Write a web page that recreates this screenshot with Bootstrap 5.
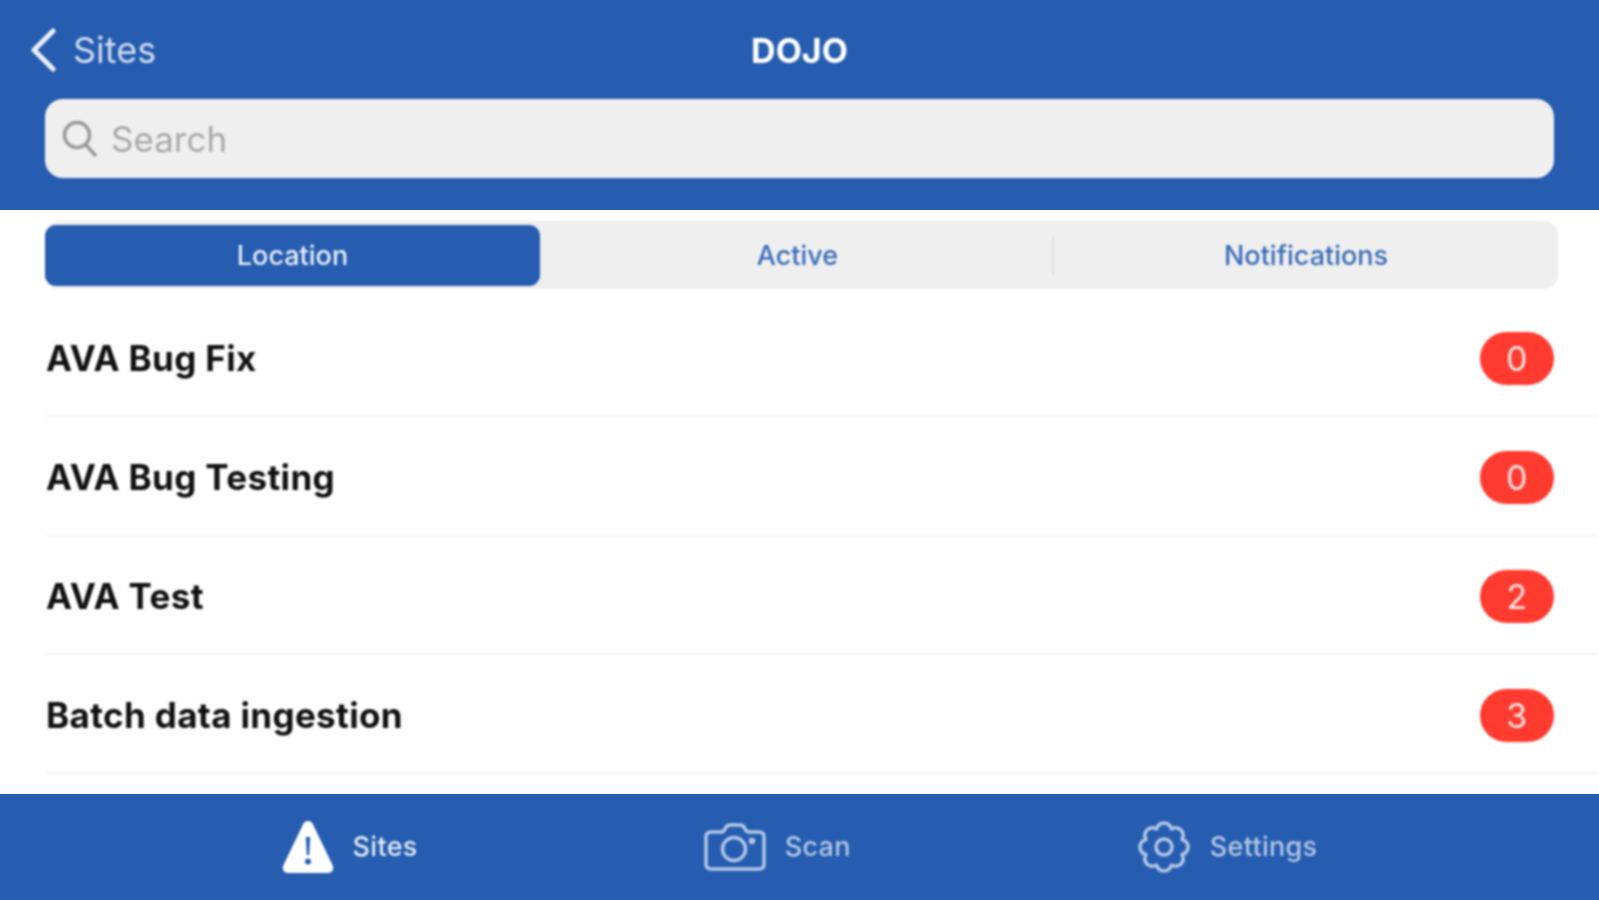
<!DOCTYPE html>
<html lang="en">

<head>
  <meta charset="UTF-8" />
  <meta name="viewport" content="width=device-width, initial-scale=1" />
  <title>DOJO</title>
  <link href="https://cdn.jsdelivr.net/npm/bootstrap@5.3.3/dist/css/bootstrap.min.css" rel="stylesheet" />
  <style>
    html, body {
      height: 100%;
      overflow: hidden;
    }

    body {
      font-family: Inter, "Liberation Sans", sans-serif;
      background: #fff;
    }

    .app-shell {
      height: 900px;
    }

    /* the reference is a soft, upscaled capture */
    .title-row, .search-box, .segment-bar, .site-list, .tab-entry {
      filter: blur(0.9px);
    }

    .top-area {
      background: #265db0;
      height: 210px;
      padding: 0 45px 32px;
    }

    .title-row {
      height: 99px;
      color: #fff;
    }

    .back-link {
      left: -15px;
      color: #cfdcf0;
      font-size: 36px;
      gap: 17px;
      text-decoration: none;
    }

    .page-title {
      font-size: 34px;
      font-weight: 700;
      padding-top: 2px;
    }

    .search-box {
      height: 79px;
      background: #efefef;
      border-radius: 18px;
      padding-left: 17px;
      gap: 13px;
    }

    .search-box input {
      font-size: 35px;
      color: #555;
      background: transparent;
      outline: none;
      padding-top: 2px !important;
    }

    .search-box input::placeholder {
      color: #a9a9a9;
    }

    .segment-bar {
      margin: 11px 41px 0 45px;
      height: 68px;
      background: #efefef;
      border-radius: 14px;
    }

    .segment-item {
      font-size: 27px;
      font-weight: 500;
      color: #3a6cb7;
      width: 512px;
      padding: 2px 0 0 3px;
    }

    .segment-first {
      width: 495px;
      height: 61px;
      padding-left: 0;
      background: #265db0;
      color: #e6edf7;
      border-radius: 11px;
    }

    .segment-last {
      border-left: 2px solid #e0e0e0;
      flex: 1;
      height: 38px;
      padding-left: 0;
    }

    .site-list {
      padding-left: 46px;
      margin-top: 9px;
    }

    .site-row {
      height: 119px;
      padding-top: 4px;
      padding-right: 45px;
      border-bottom: 2px solid #f4f4f4;
      font-size: 35px;
      font-weight: 700;
      letter-spacing: .35px;
      color: #111;
    }

    .count-pill {
      width: 74px;
      height: 53px;
      border-radius: 27px;
      background: #ff3b30;
      color: #ffe3e0;
      font-size: 34px;
      font-weight: 400;
    }

    .tab-bar {
      height: 106px;
      background: #265db0;
      gap: 286px;
    }

    .tab-entry {
      color: #b3c7e5;
      font-size: 27px;
      font-weight: 500;
      letter-spacing: .3px;
      gap: 19px;
    }

    .tab-entry-active {
      color: #dfe8f5;
    }
  </style>
</head>

<body>
  <div class="app-shell d-flex flex-column">

    <!-- Header with search -->
    <div class="top-area">
      <div class="title-row d-flex align-items-center justify-content-center position-relative">
        <a class="back-link position-absolute d-flex align-items-center" href="#">
          <svg width="26" height="44" viewBox="0 0 26 44" fill="none" stroke="#e9effa" stroke-width="5" stroke-linecap="round" stroke-linejoin="round">
            <path d="M23 3 L4 22 L23 41" />
          </svg>
          <span>Sites</span>
        </a>
        <span class="page-title">DOJO</span>
      </div>
      <div class="search-box d-flex align-items-center">
        <svg width="36" height="38" viewBox="0 0 36 38" fill="none" stroke="#9a9a9a" stroke-width="3.5" stroke-linecap="round">
          <circle cx="15" cy="15" r="12.5" />
          <path d="M24 25 L33 35" />
        </svg>
        <input class="border-0 flex-grow-1 p-0 shadow-none" type="text" placeholder="Search" />
      </div>
    </div>

    <!-- Segmented control -->
    <div class="segment-bar d-flex align-items-center">
      <div class="segment-item segment-first d-flex align-items-center justify-content-center">Location</div>
      <div class="segment-item d-flex align-items-center justify-content-center">Active</div>
      <div class="segment-item segment-last d-flex align-items-center justify-content-center">Notifications</div>
    </div>

    <!-- Sites -->
    <div class="site-list flex-grow-1 overflow-hidden">
      <div class="site-row d-flex align-items-center justify-content-between">
        <span>AVA Bug Fix</span><span class="count-pill d-flex align-items-center justify-content-center">0</span>
      </div>
      <div class="site-row d-flex align-items-center justify-content-between">
        <span>AVA Bug Testing</span><span class="count-pill d-flex align-items-center justify-content-center">0</span>
      </div>
      <div class="site-row d-flex align-items-center justify-content-between">
        <span>AVA Test</span><span class="count-pill d-flex align-items-center justify-content-center">2</span>
      </div>
      <div class="site-row d-flex align-items-center justify-content-between">
        <span>Batch data ingestion</span><span class="count-pill d-flex align-items-center justify-content-center">3</span>
      </div>
    </div>

    <!-- Bottom tabs -->
    <div class="tab-bar d-flex align-items-center justify-content-center">
      <div class="tab-entry tab-entry-active d-flex align-items-center">
        <svg width="52" height="54" viewBox="0 0 52 54">
          <path fill="#fff" fill-rule="evenodd" d="M26 1 C28.500 1 30 2.500 31 4.500 L50.500 45 C52.500 49.500 50 53 46 53 L6 53 C2 53 -0.500 49.500 1.500 45 L21 4.500 C22 2.500 23.500 1 26 1 Z M23.800 17 L24.800 35 L27.200 35 L28.200 17 Z M26 38.500 A3 3 0 1 0 26 44.500 A3 3 0 1 0 26 38.500 Z" />
        </svg>
        <span>Sites</span>
      </div>
      <div class="tab-entry d-flex align-items-center">
        <svg width="62" height="48" viewBox="0 0 62 48" fill="none" stroke="#b3c7e5" stroke-width="3.5" stroke-linejoin="round">
          <path d="M7 9 H17 C19 9 20 8 21 6 C22 3 24 2 26 2 H36 C38 2 40 3 41 6 C42 8 43 9 45 9 H55 C58.500 9 60 10.500 60 14 V41 C60 44.500 58.500 46 55 46 H7 C3.500 46 2 44.500 2 41 V14 C2 10.500 3.500 9 7 9 Z" />
          <circle cx="30" cy="26" r="11.500" />
          <circle cx="48" cy="18" r="1.500" />
        </svg>
        <span>Scan</span>
      </div>
      <div class="tab-entry d-flex align-items-center">
        <svg width="54" height="54" viewBox="0 0 54 54" fill="none" stroke="#b3c7e5" stroke-width="3.5" stroke-linejoin="round">
          <path d="M19.500 9 C22 1 32 1 34.500 9 C41.850 5.100 48.900 12.150 45 19.500 C53 22 53 32 45 34.500 C48.900 41.850 41.850 48.900 34.500 45 C32 53 22 53 19.500 45 C12.150 48.900 5.100 41.850 9 34.500 C1 32 1 22 9 19.500 C5.100 12.150 12.150 5.100 19.500 9 Z" />
          <circle cx="27" cy="27" r="8" />
        </svg>
        <span>Settings</span>
      </div>
    </div>

  </div>

  <script src="https://cdn.jsdelivr.net/npm/bootstrap@5.3.3/dist/js/bootstrap.bundle.min.js"></script>
</body>

</html>
